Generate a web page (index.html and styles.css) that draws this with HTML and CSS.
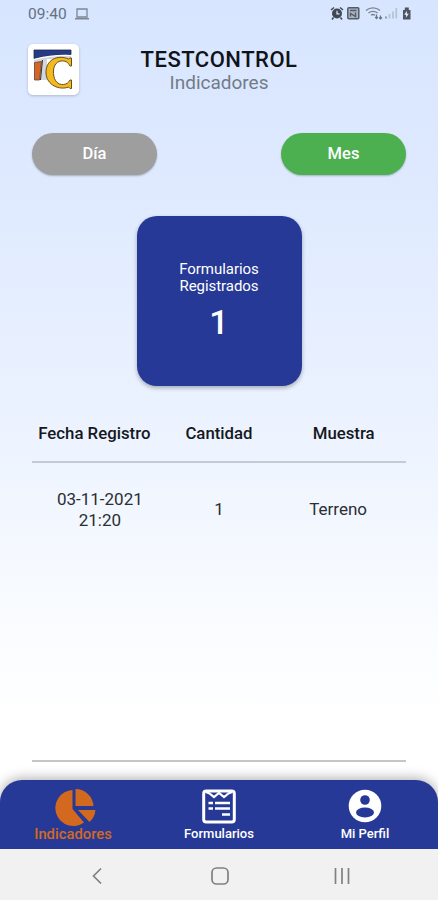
FILE: index.html
```html
<!DOCTYPE html>
<html lang="es">
<head>
  <meta charset="UTF-8">
  <meta name="viewport" content="width=device-width, initial-scale=1">
  <title>TESTCONTROL - Indicadores</title>
  <link rel="stylesheet" href="styles.css">
</head>
<body>
  <div class="app">
    <div class="status-bar">
      <span class="clock">09:40</span>
      <svg class="laptop" width="16" height="14" viewBox="0 0 16 14" fill="none" stroke="#7d8795">
        <path d="M3 2h10v8H3z" stroke-width="1.3"/>
        <path d="M1 11.7h14" stroke-width="1.6"/>
      </svg>
      <svg class="status-icons" width="84" height="16" viewBox="0 0 84 16">
        <!-- alarm -->
        <circle cx="7" cy="7.500" r="5" fill="#3f4751"/>
        <path d="M1 4l3-2.500M13 4l-3-2.500M3.500 11.500L2 13.500M10.500 11.500l1.500 2" stroke="#3f4751" stroke-width="1.5"/>
        <path d="M7 4.800v3h2.500" stroke="#dce8fb" stroke-width="1.2" fill="none"/>
        <!-- nfc -->
        <rect x="17.800" y="1.800" width="11" height="11" rx="1" fill="#aab3c0" stroke="#535c68" stroke-width="1.5"/>
        <path d="M20 4.500h6.500M20.500 10.500V7.500l5 3V6.500" stroke="#535c68" stroke-width="1.4" fill="none"/>
        <!-- wifi -->
        <path d="M36 4.500c4-3.500 10-3.500 14 0M38.500 7c2.500-2.200 6.500-2.200 9 0M41 9.300c1.200-1 2.800-1 4 0" stroke="#7a8490" stroke-width="1.4" fill="none"/>
        <path d="M46.500 8.500v4M50.500 9.500v3.500M45.200 11l1.300 1.500 1.300-1.500M49 11.500l1.500 1.500 1.500-1.500" stroke="#69737f" stroke-width="1.2" fill="none"/>
        <!-- signal -->
        <path d="M56 12.500v-2" stroke="#7d8795" stroke-width="1.6"/>
        <path d="M59.500 12.500V8M63 12.500V5.500M66.300 12.500V2" stroke="#b6c0cf" stroke-width="1.7"/>
        <!-- battery -->
        <path d="M73 4h1.800V1.500h4V4h1.700v9.500H73z" fill="#4b545f"/>
        <path d="M77 4.800l-2.800 4h2l-.4 3 3-4h-2z" fill="#eef3fb"/>
      </svg>
    </div>

    <header class="header">
      <div class="logo">
        <svg width="41" height="42" viewBox="0 0 41 42">
          <path d="M1 3h37v7H14v21H1z" fill="#d5d6dc"/>
          <path d="M1 1h37v4.500C27 5.500 14 6.500 1 9.500z" fill="#263b86" stroke="#222a4a" stroke-width=".8"/>
          <path d="M1 10.500C14 7 27 6 38 6.500" fill="none" stroke="#fff" stroke-width="1.2"/>
          <path d="M1.500 13.500l7-1L6.500 31h-5z" fill="#d9641f" stroke="#5b4a42" stroke-width=".8"/>
          <path d="M9.500 11L7.500 31" stroke="#333"/>
          <!-- C -->
          <ellipse cx="30" cy="24" rx="11.500" ry="12" fill="#fff"/>
          <path d="M38.500 9v8h-1.500c-2-4-5-5.500-9-5-5.500.8-8 6-7.500 12.500.5 7.500 4.500 11.500 10 11 3.200-.3 5.200-2 6.500-4.500h1.500v8.500h-1.500l-1.500-1.500C27 41.500 13.500 36.500 13 24 12.500 11.500 24 5 35.500 10l1.500-1z" fill="#f4b91d" stroke="#625025"/>
        </svg>
      </div>
      <div class="titles">
        <h1>TESTCONTROL</h1>
        <p>Indicadores</p>
      </div>
    </header>

    <div class="filters">
      <button class="btn btn-day">Día</button>
      <button class="btn btn-month">Mes</button>
    </div>

    <div class="card">
      <div class="card-title">Formularios<br>Registrados</div>
      <div class="card-value">1</div>
    </div>

    <main class="records">
      <div class="row head">
        <span>Fecha Registro</span>
        <span>Cantidad</span>
        <span>Muestra</span>
      </div>
      <div class="row">
        <span>03-11-2021<br>21:20</span>
        <span>1</span>
        <span>Terreno</span>
      </div>
    </main>

    <nav class="tabs">
      <a class="tab active">
        <svg width="42" height="40" viewBox="0 0 42 40" fill="#d2691e">
          <path d="M18.500 2v19l11.500 13.500A18 18 0 1 1 18.500 2z"/>
          <path d="M21.500 1A18 18 0 0 1 39.500 18h-18z"/>
          <path d="M24 22h17.500c-.5 5-2.500 9-6 12z"/>
        </svg>
        <span>Indicadores</span>
      </a>
      <a class="tab">
        <svg width="34" height="36" viewBox="0 0 34 36" fill="none" stroke="#fff">
          <rect x="1.700" y="2" width="30.600" height="31" rx="2.500" stroke-width="3"/>
          <path d="M4 3l3.500 1.500L12 8l5-4 5 4 4.500-3.500L30 3" stroke-width="2.200"/>
          <path d="M6.500 14H11M13 14h15M6.500 19.500H11M13 19.500h15M20 25.500h8" stroke-width="2.500"/>
        </svg>
        <span>Formularios</span>
      </a>
      <a class="tab">
        <svg width="34" height="34" viewBox="0 0 34 34">
          <circle cx="17" cy="17" r="16.300" fill="#fff"/>
          <circle cx="17" cy="11" r="4.800" fill="#263996"/>
          <ellipse cx="17" cy="23.500" rx="9" ry="5" fill="#263996"/>
        </svg>
        <span>Mi Perfil</span>
      </a>
    </nav>

    <div class="system-nav">
      <svg width="24" height="24" viewBox="0 0 24 24"><path d="M15 4.500L7.500 12l7.500 7.500"/></svg>
      <svg width="24" height="24" viewBox="0 0 24 24"><rect x="4" y="4" width="16" height="16" rx="4.500"/></svg>
      <svg width="24" height="24" viewBox="0 0 24 24"><path d="M5.500 4v16M12 4v16M18.500 4v16"/></svg>
    </div>
  </div>
</body>
</html>
```
FILE: styles.css
```css
* {
  box-sizing: border-box;
}
body {
  margin: 0;
  font-family: Roboto, "Liberation Sans", sans-serif;
  background: #fff;
  color: #2b2e33;
}
.app {
  height: 900px;
  display: flex;
  flex-direction: column;
  overflow: hidden;
  background: linear-gradient(#d7e5ff 0, #dfeaff 190px, #ebf2ff 410px, #f8fbff 600px, #fff 720px);
}
.status-bar {
  height: 28px;
  padding: 0 24px 0 28px;
  display: flex;
  align-items: center;
}
.clock {
  font-size: 15.5px;
  color: #66717f;
}
.laptop {
  margin-left: 7px;
}
.status-icons {
  margin-left: auto;
}
.header {
  height: 105px;
  padding: 16px 28px 0;
  display: grid;
  grid-template-columns: 51px 1fr 51px;
  align-items: start;
}
.logo {
  width: 51px;
  height: 51px;
  display: flex;
  align-items: center;
  justify-content: center;
  background: #fff;
  border-radius: 5px;
  box-shadow: 0 1px 3px rgba(0, 0, 0, 0.2);
}
.titles {
  padding-top: 3px;
  text-align: center;
}
.titles h1 {
  margin: 0;
  font-size: 22px;
  font-weight: 500;
  line-height: 26px;
  letter-spacing: 0.5px;
  color: #101318;
}
.titles p {
  margin: 0;
  font-size: 19px;
  line-height: 20px;
  color: #727b88;
}
.filters {
  padding: 0 32px;
  display: flex;
  justify-content: space-between;
}
.btn {
  width: 125px;
  height: 42px;
  padding: 0 0 1px;
  border: 0;
  border-radius: 21px;
  font: 500 16.5px Roboto, sans-serif;
  color: #fff;
  box-shadow: 0 1px 2px rgba(0, 0, 0, 0.25);
}
.btn-day {
  background: #9e9e9e;
}
.btn-month {
  background: #4caf50;
}
.card {
  width: 165px;
  height: 170px;
  margin: 41px auto 0;
  padding-top: 45px;
  border-radius: 20px;
  background: #263996;
  color: #fff;
  text-align: center;
  box-shadow: 0 2px 4px rgba(0, 0, 0, 0.3);
}
.card-title {
  font-size: 15px;
  line-height: 17px;
  letter-spacing: -0.05px;
}
.card-value {
  margin-top: 7px;
  font-size: 34px;
  font-weight: 500;
  line-height: 40px;
}
.records {
  height: 376px;
  margin: 0 32px;
  border-bottom: 2px solid #c4c6ca;
}
.row {
  height: 93px;
  display: grid;
  grid-template-columns: 1fr 1fr 1fr;
  align-items: center;
  text-align: center;
  font-size: 17px;
  line-height: 20.5px;
}
.row > :first-child {
  padding-left: 11px;
}
.row > :last-child {
  padding-right: 11px;
}
.head {
  height: 77px;
  padding-top: 18px;
  border-bottom: 2px solid #c5cad3;
  font-weight: 500;
  font-size: 16.8px;
  line-height: 20px;
  color: #15181d;
}
.head > :first-child {
  padding-left: 0;
}
.head > :last-child {
  padding-right: 0;
}
.tabs {
  height: 69px;
  margin-top: 18px;
  display: grid;
  grid-template-columns: 1fr 1fr 1fr;
  border-radius: 22px 22px 0 0;
  background: #263996;
  box-shadow: 0 -2px 12px rgba(0, 0, 0, 0.3);
}
.tab {
  display: flex;
  flex-direction: column;
  align-items: center;
  padding-top: 9px;
  font-size: 13px;
  font-weight: 500;
  line-height: 14px;
  color: #fff;
}
.tab svg {
  flex-shrink: 0;
}
.tab span {
  margin-top: auto;
  margin-bottom: 8px;
}
.active {
  padding-top: 8px;
  color: #d2691e;
  font-size: 14.8px;
}
.active svg {
  margin-left: 3px;
  margin-bottom: -3px;
}
.system-nav {
  flex: 1;
  padding: 2px 35px 0 37px;
  display: grid;
  grid-template-columns: 1fr 1fr 1fr;
  align-items: center;
  justify-items: center;
  background: #f1f1f1;
}
.system-nav svg {
  fill: none;
  stroke: #808080;
  stroke-width: 1.7;
}
```
